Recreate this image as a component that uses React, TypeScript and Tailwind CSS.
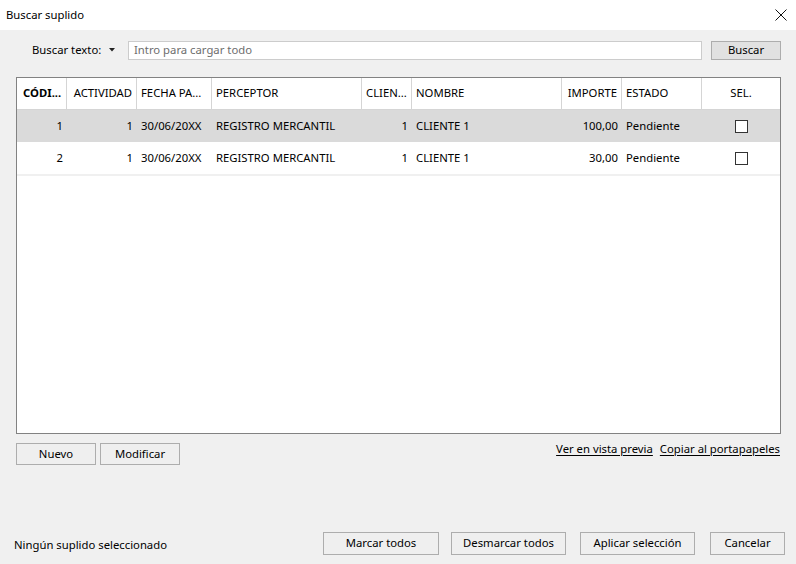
import React from 'react';

const font = { fontFamily: '"Noto Sans", "Open Sans", sans-serif' };

type Row = {
  codigo: number;
  actividad: number;
  fecha: string;
  perceptor: string;
  cliente: number;
  nombre: string;
  importe: string;
  estado: string;
};

const rows: Row[] = [
  { codigo: 1, actividad: 1, fecha: '30/06/20XX', perceptor: 'REGISTRO MERCANTIL', cliente: 1, nombre: 'CLIENTE 1', importe: '100,00', estado: 'Pendiente' },
  { codigo: 2, actividad: 1, fecha: '30/06/20XX', perceptor: 'REGISTRO MERCANTIL', cliente: 1, nombre: 'CLIENTE 1', importe: '30,00', estado: 'Pendiente' },
];

const cols = 'grid grid-cols-[50px_70px_75px_150px_50px_150px_60px_80px_1fr]';

function Btn({ children, className = '' }: { children: React.ReactNode; className?: string }) {
  return (
    <button
      className={`flex items-center justify-center border border-[#adadad] bg-[#efefef] text-[11.3px] text-black ${className}`}
    >
      {children}
    </button>
  );
}

export default function App() {
  return (
    <div className="w-[796px] h-[564px] flex flex-col bg-[#f0f0f0] text-[11.3px] text-black overflow-hidden" style={font}>
      {/* title bar */}
      <div className="h-[30px] bg-white flex items-center justify-between pl-[6px] pr-[8px]">
        <span>Buscar suplido</span>
        <svg width="12" height="12" viewBox="0 0 12 12" className="mr-[1px]">
          <path d="M0.5 0.5 L11.5 11.5 M11.5 0.5 L0.5 11.5" stroke="#111" strokeWidth="1" fill="none" />
        </svg>
      </div>

      <div className="flex-1 flex flex-col pl-[16px] pr-[15px] pt-[10px] pb-[9px]">
        {/* search row */}
        <div className="flex items-center h-[20px]">
          <span className="ml-[16px] w-[77px]">Buscar texto:</span>
          <svg width="6" height="4" viewBox="0 0 6 4">
            <path d="M0 0 H6 L3 3.5 Z" fill="#222" />
          </svg>
          <div className="ml-[13px] flex-1 h-[19px] mt-[1px] bg-white border border-[#cccccc] flex items-center pl-[5px] text-[#6d6d6d]">
            Intro para cargar todo
          </div>
          <button className="ml-[9px] w-[70px] h-[19px] border border-[#adadad] bg-[#e1e1e1] flex items-center justify-center">
            Buscar
          </button>
        </div>

        {/* table */}
        <div className="mt-[17px] h-[357px] border border-[#828282] bg-white flex flex-col">
          <div className={`${cols} h-[32px] border-b border-[#d5d5d5] items-center`}>
            <div className="pl-[6px] font-bold h-full flex items-center border-r border-[#d5d5d5]">CÓDI...</div>
            <div className="pr-[4px] justify-end h-full flex items-center border-r border-[#d5d5d5]">ACTIVIDAD</div>
            <div className="pl-[4px] h-full flex items-center border-r border-[#d5d5d5]">FECHA PA...</div>
            <div className="pl-[4px] h-full flex items-center border-r border-[#d5d5d5]">PERCEPTOR</div>
            <div className="pl-[4px] h-full flex items-center border-r border-[#d5d5d5]">CLIEN...</div>
            <div className="pl-[4px] h-full flex items-center border-r border-[#d5d5d5]">NOMBRE</div>
            <div className="pr-[4px] justify-end h-full flex items-center border-r border-[#d5d5d5]">IMPORTE</div>
            <div className="pl-[4px] h-full flex items-center border-r border-[#d5d5d5]">ESTADO</div>
            <div className="justify-center h-full flex items-center">SEL.</div>
          </div>
          {rows.map((r, i) => (
            <div key={r.codigo} className={`${cols} h-[32px] items-center ${i === 0 ? 'bg-[#dadada]' : 'bg-white'}`}>
              <div className="text-right pr-[4px]">{r.codigo}</div>
              <div className="text-right pr-[4px]">{r.actividad}</div>
              <div className="pl-[4px]">{r.fecha}</div>
              <div className="pl-[4px]">{r.perceptor}</div>
              <div className="text-right pr-[4px]">{r.cliente}</div>
              <div className="pl-[4px]">{r.nombre}</div>
              <div className="text-right pr-[4px]">{r.importe}</div>
              <div className="pl-[4px]">{r.estado}</div>
              <div className="flex justify-center">
                <div className="w-[13px] h-[13px] border border-[#333] bg-white" />
              </div>
            </div>
          ))}
          <div className="h-[2px] bg-[#f0f0f0]" />
        </div>

        {/* actions under table */}
        <div className="mt-[9px] flex items-start">
          <Btn className="w-[80px] h-[22px]">Nuevo</Btn>
          <Btn className="ml-[4px] w-[80px] h-[22px]">Modificar</Btn>
          <div className="ml-auto flex gap-[7px] mt-[-2px] mr-[1px]">
            <span className="underline underline-offset-2">Ver en vista previa</span>
            <span className="underline underline-offset-2">Copiar al portapapeles</span>
          </div>
        </div>

        {/* footer */}
        <div className="mt-auto flex items-center">
          <span className="ml-[-2px] mt-[4px]">Ningún suplido seleccionado</span>
          <div className="ml-auto flex gap-[12px] mr-[-4px]">
            <Btn className="w-[116px] h-[23px]">Marcar todos</Btn>
            <Btn className="w-[115px] h-[23px]">Desmarcar todos</Btn>
            <Btn className="w-[115px] h-[23px] ml-[2px]">Aplicar selección</Btn>
            <Btn className="w-[75px] h-[23px] ml-[3px]">Cancelar</Btn>
          </div>
        </div>
      </div>
    </div>
  );
}
